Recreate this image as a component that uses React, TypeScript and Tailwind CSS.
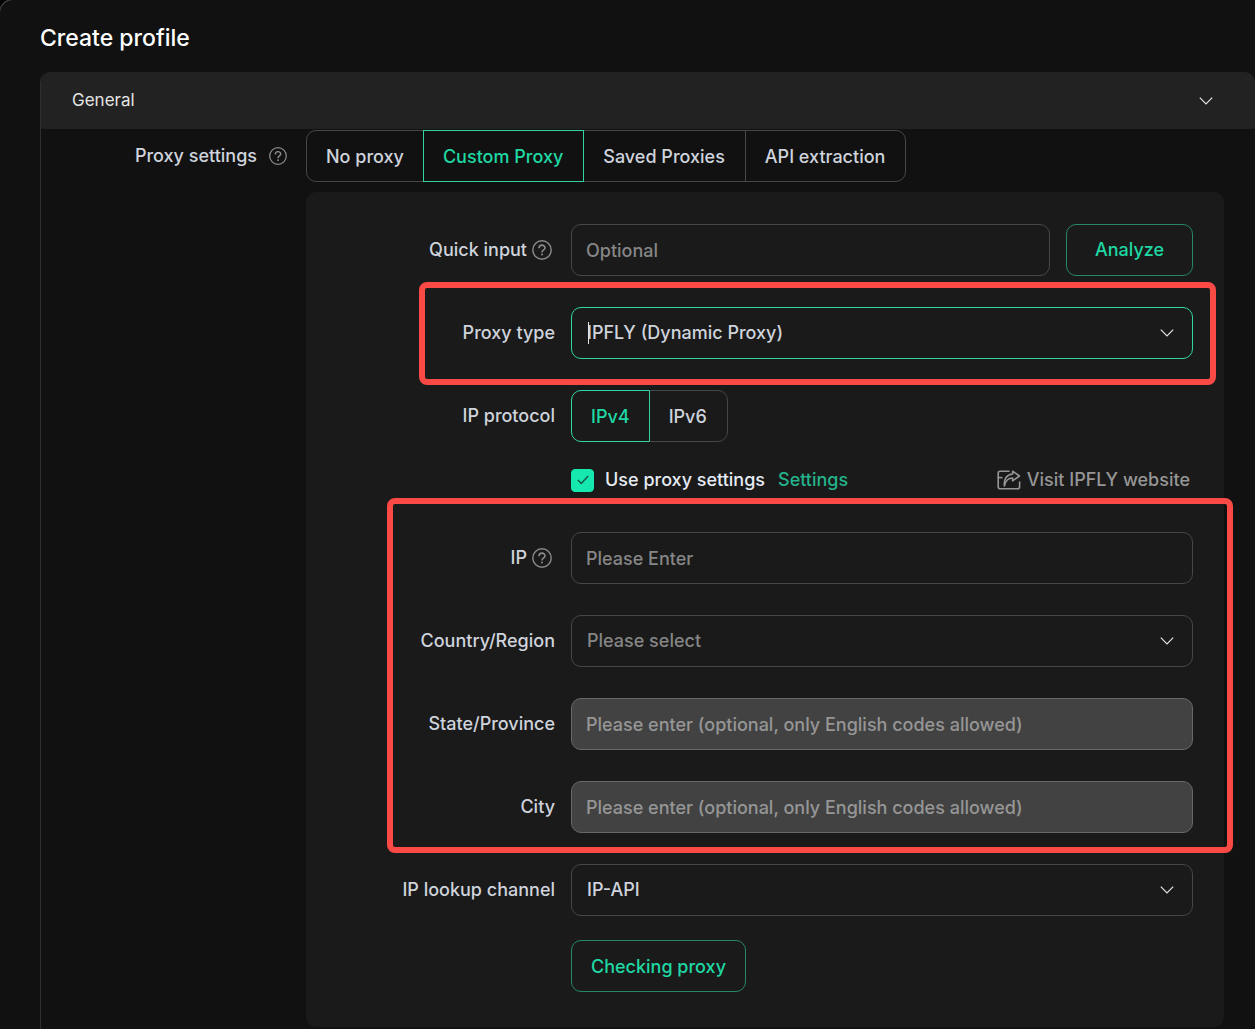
import React, { useState } from 'react';
import { clsx } from 'clsx';

const proxyTabs = ['No proxy', 'Custom Proxy', 'Saved Proxies', 'API extraction'];
const protocols = ['IPv4', 'IPv6'];

const fieldBase = 'h-[52px] w-full rounded-[10px] border text-lg font-[450] outline-none';

function ChevronIcon({ className }: { className?: string }) {
  return (
    <svg className={clsx('h-2 w-[14px]', className)} viewBox="0 0 14 8" fill="none" stroke="#e5e5e5" strokeWidth="1.2" aria-hidden="true">
      <path d="M0.8 0.6 L7 6.8 L13.2 0.6" />
    </svg>
  );
}

function HelpIcon({ className }: { className?: string }) {
  return (
    <svg className={className} viewBox="0 0 20 20" fill="none" stroke="#8a8a8a" strokeWidth="1.4" aria-hidden="true">
      <circle cx="10" cy="10" r="9.2" />
      <path strokeWidth="1.6" d="M7 8.2 C7 4.2 13 4.2 13 7.9 C13 10 10 9.9 10 12.4" />
      <circle cx="10" cy="14.6" r="1" fill="#8a8a8a" stroke="none" />
    </svg>
  );
}

function ShareIcon() {
  return (
    <svg className="h-5 w-6" viewBox="0 0 24 20" fill="none" stroke="#969696" strokeWidth="1.6" strokeLinejoin="round" aria-hidden="true">
      <path d="M12.5 1.2 H3.2 Q1.2 1.2 1.2 3.2 V16.8 Q1.2 18.8 3.2 18.8 H20.6 Q22.6 18.8 22.6 16.8 V11.5" />
      <path d="M1.2 7.6 H5.5" />
      <path d="M15.6 1.2 L22.4 6 L15.6 10.8 V8 C11.5 8 8.6 10 7.4 16 C6.6 9 9.8 4.4 15.6 4 Z" />
    </svg>
  );
}

interface RowProps {
  label?: string;
  htmlFor?: string;
  help?: boolean;
  children: React.ReactNode;
}

function Row({ label, htmlFor, help, children }: RowProps) {
  return (
    <div className="flex items-center gap-4">
      <div className="flex w-[249px] shrink-0 items-center justify-end gap-[5px]">
        {label && <label htmlFor={htmlFor}>{label}</label>}
        {help && <HelpIcon className="mr-[3px] h-5 w-5" />}
      </div>
      <div className="flex min-w-0 flex-1 items-center">{children}</div>
    </div>
  );
}

interface SelectFieldProps {
  id: string;
  options: string[];
  focused?: boolean;
  placeholder?: boolean;
}

function SelectField({ id, options, focused, placeholder }: SelectFieldProps) {
  return (
    <div className="relative w-full">
      <select
        id={id}
        className={clsx(
          fieldBase,
          'appearance-none bg-[#1a1a1a] px-[15px]',
          focused ? 'border-[#2fd6a4]' : 'border-[#474747]',
          placeholder ? 'text-[#868686]' : 'text-[#cfd3dc]'
        )}
      >
        {options.map(option => (
          <option key={option}>{option}</option>
        ))}
      </select>
      {/* text caret of the filterable select */}
      {focused && <span className="absolute top-[15px] left-[17px] h-[22px] w-px bg-[#e5e5e5]" />}
      <ChevronIcon className="pointer-events-none absolute top-[22px] right-[19px]" />
    </div>
  );
}

interface SegmentedProps {
  items: string[];
  active: string;
  onChange: (item: string) => void;
}

function Segmented({ items, active, onChange }: SegmentedProps) {
  return (
    <div className="flex">
      {items.map(item => (
        <button
          key={item}
          type="button"
          onClick={() => onChange(item)}
          className={clsx(
            '-ml-px h-[52px] border pr-5 pl-[19px] pt-0.5 whitespace-nowrap first:ml-0 first:rounded-l-[10px] first:pr-[19px] last:rounded-r-[10px]',
            item === active ? 'z-10 border-[#2fd6a4] text-[#1fd8a4]' : 'border-[#474747] text-[#cfd3dc]'
          )}
        >
          {item}
        </button>
      ))}
    </div>
  );
}

function Highlight({ className }: { className: string }) {
  return <div className={clsx('pointer-events-none absolute z-20 rounded-lg border-6 border-[#f94a46]', className)} />;
}

export default function App() {
  const [tab, setTab] = useState('Custom Proxy');
  const [protocol, setProtocol] = useState('IPv4');
  const [useProxy, setUseProxy] = useState(true);

  return (
    <div className="overflow-hidden bg-black font-['Inter',sans-serif] text-lg font-[450] text-[#cfd3dc]">
      <main className="-mt-px -ml-px min-h-screen rounded-tl-[14px] border-t border-l border-[#4a4a4a] bg-[#111111] pl-10">
        <h1 className="pt-[21px] pb-4 text-[23px] leading-[35px] text-white">Create profile</h1>

        <section className="rounded-tl-[10px] border-l border-[#2f2f2f]">
          <button type="button" className="flex h-[57px] w-full items-center justify-between rounded-t-[10px] bg-[#222222] pr-[42px] pl-[31px] text-[17px] font-normal text-[#e5e5e5]">
            <span>General</span>
            <ChevronIcon />
          </button>

          <div className="flex items-start pt-px pr-[31px] pb-0.5">
            <div className="flex h-[52px] w-[265px] shrink-0 items-center justify-end gap-3 pr-[19px]">
              <span>Proxy settings</span>
              <HelpIcon className="h-[18px] w-[18px]" />
            </div>

            <div className="min-w-0 flex-1">
              <Segmented items={proxyTabs} active={tab} onChange={setTab} />

              <form className="mt-[10px] rounded-[10px] bg-[#1a1a1a] pt-8 pr-[31px] pb-[35px]" onSubmit={e => e.preventDefault()}>
                <div className="flex flex-col gap-[31px]">
                  <Row label="Quick input" htmlFor="quick" help>
                    <input id="quick" placeholder="Optional" className={clsx(fieldBase, 'border-[#474747] px-[14px] placeholder:text-[#868686]')} />
                    <button type="button" className="ml-4 h-[52px] w-[127px] shrink-0 rounded-[10px] border border-[#26856a] font-medium text-[#1fd8a4]">
                      Analyze
                    </button>
                  </Row>

                  <div className="relative">
                    <Highlight className="-top-[25px] -right-[23px] -bottom-[26px] left-[113px]" />
                    <Row label="Proxy type" htmlFor="type">
                      <SelectField id="type" options={['IPFLY (Dynamic Proxy)']} focused />
                    </Row>
                  </div>

                  <Row label="IP protocol">
                    <Segmented items={protocols} active={protocol} onChange={setProtocol} />
                  </Row>
                </div>

                <div className="pt-6 pb-[38px]">
                  <Row>
                    <label className="flex items-center gap-[11px] text-[#e5eaf3]">
                      <input type="checkbox" className="peer sr-only" checked={useProxy} onChange={e => setUseProxy(e.target.checked)} />
                      <span className="flex h-[23px] w-[23px] items-center justify-center rounded border border-[#474747] peer-checked:border-[#16e9b0] peer-checked:bg-[#16e9b0]">
                        {useProxy && (
                          <svg className="h-[10px] w-3" viewBox="0 0 12 10" fill="none" stroke="#164f40" strokeWidth="1.3" aria-hidden="true">
                            <path d="M0.8 5 L4.3 8.5 L11.2 1" />
                          </svg>
                        )}
                      </span>
                      Use proxy settings
                    </label>
                    <a href="#settings" className="ml-[13px] text-[#24b38b]">Settings</a>
                    <a href="#ipfly" className="mr-[3px] ml-auto flex items-center gap-[6px] text-[#969696]">
                      <ShareIcon />
                      Visit IPFLY website
                    </a>
                  </Row>
                </div>

                <div className="relative flex flex-col gap-[31px]">
                  <Highlight className="-top-[34px] -right-10 -bottom-5 left-[81px]" />
                  <Row label="IP" htmlFor="ip" help>
                    <input id="ip" placeholder="Please Enter" className={clsx(fieldBase, 'border-[#474747] px-[14px] placeholder:text-[#868686]')} />
                  </Row>
                  <Row label="Country/Region" htmlFor="country">
                    <SelectField id="country" options={['Please select']} placeholder />
                  </Row>
                  <Row label="State/Province" htmlFor="state">
                    <input id="state" disabled placeholder="Please enter (optional, only English codes allowed)" className={clsx(fieldBase, 'border-[#686868] bg-[#424242] px-[14px] placeholder:text-[#969696]')} />
                  </Row>
                  <Row label="City" htmlFor="city">
                    <input id="city" disabled placeholder="Please enter (optional, only English codes allowed)" className={clsx(fieldBase, 'border-[#686868] bg-[#424242] px-[14px] placeholder:text-[#969696]')} />
                  </Row>
                </div>

                <div className="flex flex-col gap-6 pt-[31px]">
                  <Row label="IP lookup channel" htmlFor="channel">
                    <SelectField id="channel" options={['IP-API']} />
                  </Row>
                  <Row>
                    <button type="button" className="h-[52px] rounded-[10px] border border-[#26856a] px-[19px] pt-0.5 text-[#1fd8a4]">
                      Checking proxy
                    </button>
                  </Row>
                </div>
              </form>
            </div>
          </div>
        </section>
      </main>
    </div>
  );
}
